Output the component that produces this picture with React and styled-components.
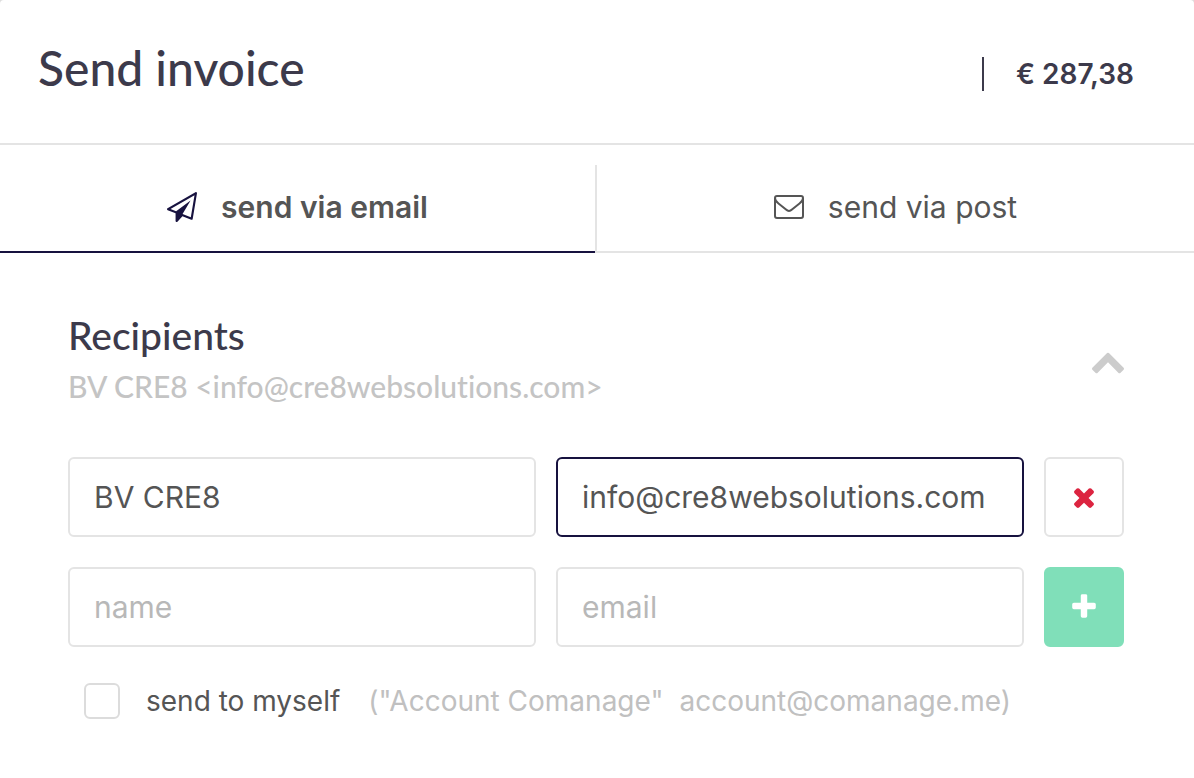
import React, { useState } from "react";
import styled, { createGlobalStyle, css } from "styled-components";

const color = {
  heading: "#3c3a4b",
  navy: "#17123f",
  text: "#555555",
  muted: "#c4c4c4",
  line: "#e4e4e4",
  green: "#80dfb9",
  red: "#dc2440",
};

const GlobalStyle = createGlobalStyle`
  *, *::before, *::after { box-sizing: border-box; }
  body {
    margin: 0;
    background: #dddddd;
    color: ${color.text};
    font-family: Inter, "Liberation Sans", sans-serif;
    font-size: 30px;
    line-height: 40px;
  }
  button, input { font: inherit; color: inherit; }
`;

const Dialog = styled.main`
  min-height: 100vh;
  border-radius: 4px 4px 0 0;
  background: #ffffff;
`;

const headingFont = css`
  font-family: Lato, sans-serif;
  font-weight: 500;
  font-variant-ligatures: none;
`;

const Header = styled.header`
  display: flex;
  align-items: center;
  justify-content: space-between;
  padding: 36px 60px 43px 38px;
  border-bottom: 2px solid ${color.line};
  color: ${color.heading};
`;

const Title = styled.h1`
  ${headingFont}
  margin: 0;
  font-size: 48px;
  line-height: 64px;
`;

const Amount = styled.strong`
  display: flex;
  align-items: center;
  gap: 32px;
  padding-top: 12px;
  font-size: 28px;
  font-weight: 600;

  &::before {
    content: "";
    width: 2px;
    height: 34px;
    background: ${color.heading};
  }
`;

const Tabs = styled.div`
  display: grid;
  grid-template-columns: calc(50% - 2px) 1fr;
`;

const Tab = styled.button`
  padding: 20px 0 0;
  border: 0;
  border-bottom: 2px solid ${(p) => (p.$active ? color.navy : color.line)};
  background: none;
  cursor: pointer;
  font-weight: ${(p) => (p.$active ? 600 : 400)};
`;

const TabLabel = styled.span`
  display: flex;
  align-items: center;
  justify-content: center;
  gap: 24px;
  width: 100%;
  height: 86px;
  padding-bottom: 2px;
  border-left: ${(p) => (p.$divided ? `2px solid ${color.line}` : "0")};
`;

const Icon = styled.svg`
  display: block;
  flex: none;
  width: ${(p) => p.$size}px;
  height: ${(p) => p.$size}px;
  fill: ${(p) => p.$color || "currentColor"};
`;

const Section = styled.section`
  padding: 56px 70px 58px 68px;
`;

const SectionHead = styled.div`
  display: flex;
  align-items: center;
  justify-content: space-between;
  margin-bottom: 51px;
`;

const SectionTitle = styled.h2`
  ${headingFont}
  margin: 0;
  color: ${color.heading};
  font-size: 39px;
  line-height: 52px;
`;

const Summary = styled.p`
  ${headingFont}
  margin: 5px 0 0;
  color: ${color.muted};
  font-size: 30px;
`;

const Toggle = styled.button`
  padding: 6px 0 0;
  border: 0;
  background: none;
  color: #cccccc;
  cursor: pointer;
`;

const RecipientRow = styled.div`
  display: grid;
  grid-template-columns: 1fr 1fr 80px;
  gap: 20px;
  margin-bottom: 30px;
`;

const Field = styled.input`
  width: 100%;
  min-width: 0;
  height: 80px;
  padding: 0 24px;
  border: 2px solid ${(p) => (p.$active ? color.navy : color.line)};
  border-radius: 6px;
  outline: 0;
  background: #ffffff;

  &::placeholder { color: #b8b8b8; opacity: 1; }
`;

const SquareButton = styled.button`
  display: grid;
  place-items: center;
  height: 80px;
  padding: 0;
  border: 2px solid ${color.line};
  border-radius: 6px;
  background: #ffffff;
  color: ${color.red};
  cursor: pointer;

  ${(p) =>
    p.$add &&
    css`
      border-color: ${color.green};
      background: ${color.green};
      color: #ffffff;
    `}
`;

const CheckLabel = styled.label`
  display: flex;
  align-items: center;
  padding: 4px 16px 0;
  font-size: 28px;
  cursor: pointer;
`;

const Checkbox = styled.input`
  appearance: none;
  flex: none;
  width: 36px;
  height: 36px;
  margin: 0 26px 0 0;
  border: 2px solid #dcdcdc;
  border-radius: 6px;
  background: #ffffff;

  &:checked { background: ${color.navy}; }
`;

const AccountHint = styled.span`
  display: flex;
  gap: 16px;
  margin-left: 28px;
  color: #c0c0c0;
`;

const PlaneIcon = () => (
  <Icon $size={30} $color={color.navy} viewBox="0 0 1792 1792" aria-hidden="true">
    <path d="M1764 11q33 24 27 64l-256 1536q-5 29-32 45-14 8-31 8-11 0-24-5l-527-215-298 327q-18 21-47 21-14 0-23-4-19-7-30-23.5t-11-36.5v-452l-472-193q-37-14-40-55-3-39 32-59l1664-960q35-21 68 2zm-342 1499l221-1323-1434 827 336 137 863-639-478 797z" />
  </Icon>
);

const EnvelopeIcon = () => (
  <Icon $size={30} viewBox="0 0 30 30" aria-hidden="true">
    <g fill="none" stroke="currentColor" strokeWidth="2">
      <rect x="1" y="4" width="28" height="22" rx="2" />
      <path d="M1 6C1 8 2.500 10 4.500 11.500L12 17.500Q15 20.500 18 17.500L25.500 11.500C27.500 10 29 8 29 6" />
    </g>
  </Icon>
);

const ChevronUpIcon = () => (
  <Icon $size={32} viewBox="90 90 1612 1612" aria-hidden="true">
    <path d="M1683 1331l-166 165q-19 19-45 19t-45-19l-531-531-531 531q-19 19-45 19t-45-19l-166-165q-19-19-19-45.500t19-45.500l742-741q19-19 45-19t45 19l742 741q19 19 19 45.500t-19 45.500z" />
  </Icon>
);

const RemoveIcon = () => (
  <Icon $size={30} viewBox="0 0 1792 1792" aria-hidden="true">
    <path d="M1490 1322q0 40-28 68l-136 136q-28 28-68 28t-68-28l-294-294-294 294q-28 28-68 28t-68-28l-136-136q-28-28-28-68t28-68l294-294-294-294q-28-28-28-68t28-68l136-136q28-28 68-28t68 28l294 294 294-294q28-28 68-28t68 28l136 136q28 28 28 68t-28 68l-294 294 294 294q28 28 28 68z" />
  </Icon>
);

const PlusIcon = () => (
  <Icon $size={30} viewBox="0 0 1792 1792" aria-hidden="true">
    <path d="M1600 736v192q0 40-28 68t-68 28h-416v416q0 40-28 68t-68 28h-192q-40 0-68-28t-28-68v-416h-416q-40 0-68-28t-28-68v-192q0-40 28-68t68-28h416v-416q0-40 28-68t68-28h192q40 0 68 28t28 68v416h416q40 0 68 28t28 68z" />
  </Icon>
);

export default function App() {
  const [tab, setTab] = useState("email");
  return (
    <>
      <GlobalStyle />
      <Dialog>
        <Header>
          <Title>Send invoice</Title>
          <Amount>€ 287,38</Amount>
        </Header>
        <Tabs role="tablist">
          <Tab
            type="button"
            role="tab"
            aria-selected={tab === "email"}
            $active={tab === "email"}
            onClick={() => setTab("email")}
          >
            <TabLabel>
              <PlaneIcon />
              send via email
            </TabLabel>
          </Tab>
          <Tab
            type="button"
            role="tab"
            aria-selected={tab === "post"}
            $active={tab === "post"}
            onClick={() => setTab("post")}
          >
            <TabLabel $divided>
              <EnvelopeIcon />
              send via post
            </TabLabel>
          </Tab>
        </Tabs>
        <Section>
          <SectionHead>
            <div>
              <SectionTitle>Recipients</SectionTitle>
              <Summary>BV CRE8 &lt;info@cre8websolutions.com&gt;</Summary>
            </div>
            <Toggle type="button" aria-label="Collapse recipients">
              <ChevronUpIcon />
            </Toggle>
          </SectionHead>
          <RecipientRow>
            <Field aria-label="Recipient name" defaultValue="BV CRE8" />
            <Field
              $active
              type="email"
              aria-label="Recipient email"
              defaultValue="info@cre8websolutions.com"
            />
            <SquareButton type="button" aria-label="Remove recipient">
              <RemoveIcon />
            </SquareButton>
          </RecipientRow>
          <RecipientRow>
            <Field aria-label="New recipient name" placeholder="name" />
            <Field type="email" aria-label="New recipient email" placeholder="email" />
            <SquareButton type="button" $add aria-label="Add recipient">
              <PlusIcon />
            </SquareButton>
          </RecipientRow>
          <CheckLabel>
            <Checkbox type="checkbox" />
            send to myself
            <AccountHint>
              <span>("Account Comanage"</span>
              <span>account@comanage.me)</span>
            </AccountHint>
          </CheckLabel>
        </Section>
      </Dialog>
    </>
  );
}
